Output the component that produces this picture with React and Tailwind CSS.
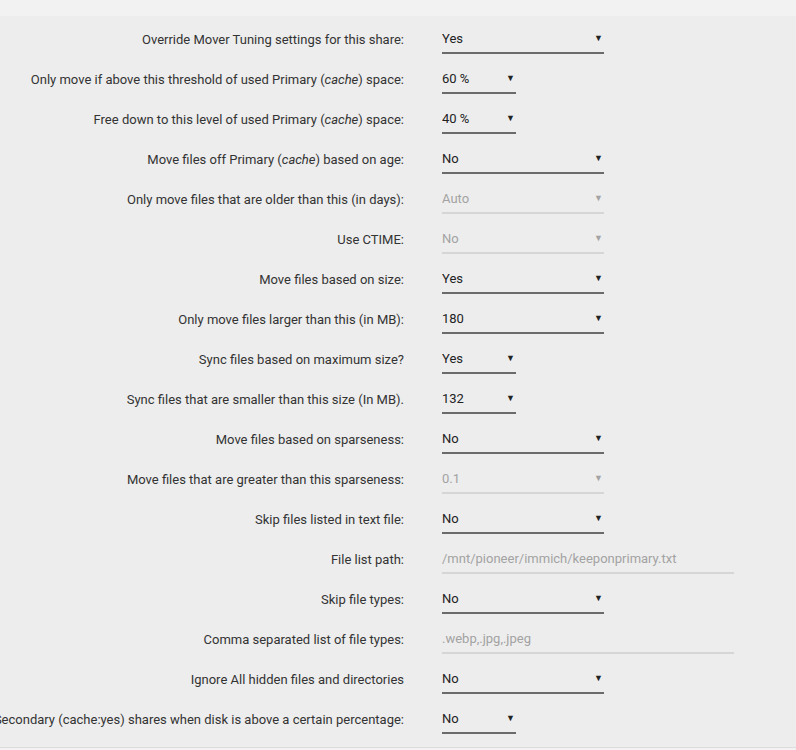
import React from 'react';

const ROWS = [
  { label: 'Override Mover Tuning settings for this share:', value: 'Yes', type: 'wide' },
  { label: <>Only move if above this threshold of used Primary (<i>cache</i>) space:</>, value: '60 %', type: 'narrow' },
  { label: <>Free down to this level of used Primary (<i>cache</i>) space:</>, value: '40 %', type: 'narrow' },
  { label: <>Move files off Primary (<i>cache</i>) based on age:</>, value: 'No', type: 'wide' },
  { label: 'Only move files that are older than this (in days):', value: 'Auto', type: 'wide', disabled: true },
  { label: 'Use CTIME:', value: 'No', type: 'wide', disabled: true },
  { label: 'Move files based on size:', value: 'Yes', type: 'wide' },
  { label: 'Only move files larger than this (in MB):', value: '180', type: 'wide' },
  { label: 'Sync files based on maximum size?', value: 'Yes', type: 'narrow' },
  { label: 'Sync files that are smaller than this size (In MB).', value: '132', type: 'narrow' },
  { label: 'Move files based on sparseness:', value: 'No', type: 'wide' },
  { label: 'Move files that are greater than this sparseness:', value: '0.1', type: 'wide', disabled: true },
  { label: 'Skip files listed in text file:', value: 'No', type: 'wide' },
  { label: 'File list path:', value: '/mnt/pioneer/immich/keeponprimary.txt', type: 'text' },
  { label: 'Skip file types:', value: 'No', type: 'wide' },
  { label: 'Comma separated list of file types:', value: '.webp,.jpg,.jpeg', type: 'text' },
  { label: 'Ignore All hidden files and directories', value: 'No', type: 'wide' },
  { label: 'Move All from Primary->Secondary (cache:yes) shares when disk is above a certain percentage:', value: 'No', type: 'narrow' },
];

function Control({ row }) {
  if (row.type === 'text') {
    return (
      <div className="flex h-[30px] w-[292px] items-center border-b-2 border-[#d6d6d6] pt-[1px] text-[#a3a3a3]">
        {row.value}
      </div>
    );
  }
  const width = row.type === 'wide' ? 'w-[162px]' : 'w-[74px]';
  const tone = row.disabled
    ? 'border-[#d6d6d6] text-[#a3a3a3]'
    : 'border-[#6b6b6b] text-[#222]';
  return (
    <div className={`flex h-[30px] items-center justify-between border-b-2 pt-[1px] pr-[1px] ${width} ${tone}`}>
      <span>{row.value}</span>
      <span className="text-[9px]">▼</span>
    </div>
  );
}

export default function App() {
  return (
    <div className="min-h-[750px] bg-[#ededed] text-[13px] text-[#333] font-['Roboto',sans-serif]">
      <div className="h-[16px] bg-[#f2f2f2]" />
      <div className="flex flex-col pt-[3px]">
        {ROWS.map((row, i) => (
          <div key={i} className="flex h-10 items-center">
            <div className="flex w-[404px] shrink-0 justify-end pt-[1px]">
              <span className="whitespace-nowrap">{row.label}</span>
            </div>
            <div className="ml-[38px]">
              <Control row={row} />
            </div>
          </div>
        ))}
      </div>
      <div className="mt-[8px] h-[3px] border-t border-[#dcdcdc] bg-[#f2f2f2]" />
    </div>
  );
}
